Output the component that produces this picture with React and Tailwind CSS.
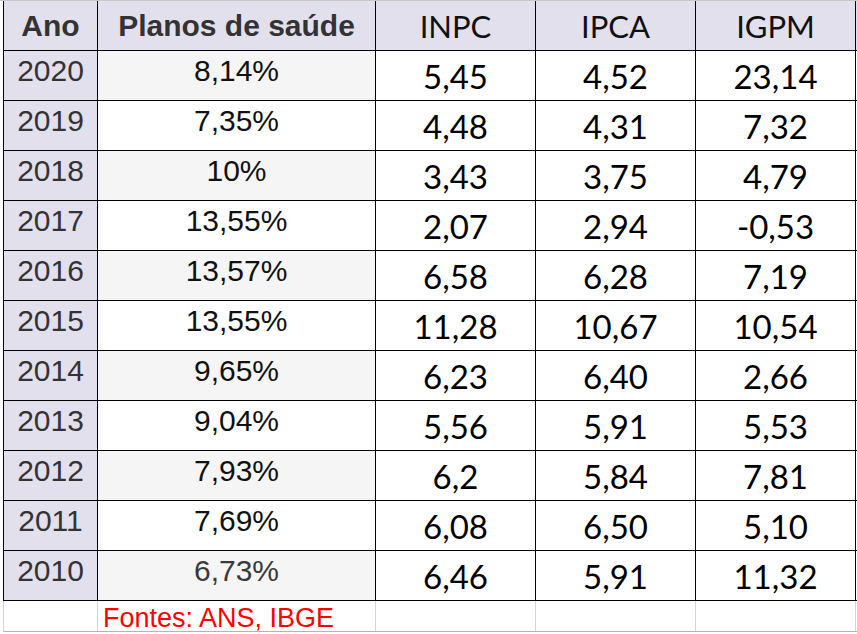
import React from 'react';

const rows = [
  { ano: '2020', planos: '8,14%', inpc: '5,45', ipca: '4,52', igpm: '23,14' },
  { ano: '2019', planos: '7,35%', inpc: '4,48', ipca: '4,31', igpm: '7,32' },
  { ano: '2018', planos: '10%', inpc: '3,43', ipca: '3,75', igpm: '4,79' },
  { ano: '2017', planos: '13,55%', inpc: '2,07', ipca: '2,94', igpm: '-0,53' },
  { ano: '2016', planos: '13,57%', inpc: '6,58', ipca: '6,28', igpm: '7,19' },
  { ano: '2015', planos: '13,55%', inpc: '11,28', ipca: '10,67', igpm: '10,54' },
  { ano: '2014', planos: '9,65%', inpc: '6,23', ipca: '6,40', igpm: '2,66' },
  { ano: '2013', planos: '9,04%', inpc: '5,56', ipca: '5,91', igpm: '5,53' },
  { ano: '2012', planos: '7,93%', inpc: '6,2', ipca: '5,84', igpm: '7,81' },
  { ano: '2011', planos: '7,69%', inpc: '6,08', ipca: '6,50', igpm: '5,10' },
  { ano: '2010', planos: '6,73%', inpc: '6,46', ipca: '5,91', igpm: '11,32' },
];

const arial = "font-['Liberation_Sans',Arial,sans-serif]";
const calibri = "font-['Lato','Open_Sans',sans-serif]";

export default function App() {
  return (
    <div className="w-[857px] h-[634px] bg-white border-t border-[#c8c8c8] overflow-hidden">
      {/* cabeçalho */}
      <div className="ml-[3px] flex h-[50px] border-l border-b border-l-black border-b-black bg-[#e3e0ee]">
        <div className={`w-[94px] shrink-0 border-r border-black pt-[10px] text-center text-[30px] font-bold leading-none text-[#333] ${arial}`}>
          Ano
        </div>
        <div className={`w-[278px] shrink-0 border-r border-black pt-[10px] text-center text-[30px] font-bold leading-none text-[#333] ${arial}`}>
          Planos de saúde
        </div>
        {['INPC', 'IPCA', 'IGPM'].map((h) => (
          <div key={h} className={`w-[160px] shrink-0 border-r border-black pt-[10px] text-center text-[31px] leading-none text-[#111] ${calibri}`}>
            {h}
          </div>
        ))}
      </div>

      {rows.map((r, i) => (
        <div key={r.ano} className="ml-[3px] flex h-[50px] border-l border-b border-black">
          <div className={`w-[94px] shrink-0 border-r border-black bg-[#e3e0ee] pt-[5px] text-center text-[30px] leading-none text-[#333] ${arial}`}>
            {r.ano}
          </div>
          <div
            className={`w-[278px] shrink-0 border-r border-black pt-[5px] text-center text-[30px] leading-none ${arial} ${
              i % 2 === 0 ? 'bg-[#f5f5f5]' : 'bg-white'
            } ${i === rows.length - 1 ? 'text-[#3a3a3a]' : 'text-[#111]'}`}
          >
            {r.planos}
          </div>
          {[r.inpc, r.ipca, r.igpm].map((v, j) => (
            <div key={j} className={`w-[160px] shrink-0 border-r border-black pt-[9px] text-center text-[33px] leading-none text-black ${calibri}`}>
              {v}
            </div>
          ))}
        </div>
      ))}

      {/* rodapé */}
      <div className="ml-[3px] flex h-[31px] border-l border-b border-l-[#d4d4d4] border-b-[#b4b4b4]">
        <div className="w-[94px] shrink-0 border-r border-[#d4d4d4]" />
        <div className={`w-[278px] shrink-0 border-r border-[#d4d4d4] pl-[5px] pt-[4px] text-[27px] leading-none text-[#f00] whitespace-nowrap ${arial}`}>
          Fontes: ANS, IBGE
        </div>
        <div className="w-[160px] shrink-0 border-r border-[#d4d4d4]" />
        <div className="w-[160px] shrink-0 border-r border-[#d4d4d4]" />
        <div className="w-[160px] shrink-0 border-r border-[#d4d4d4]" />
      </div>
    </div>
  );
}
